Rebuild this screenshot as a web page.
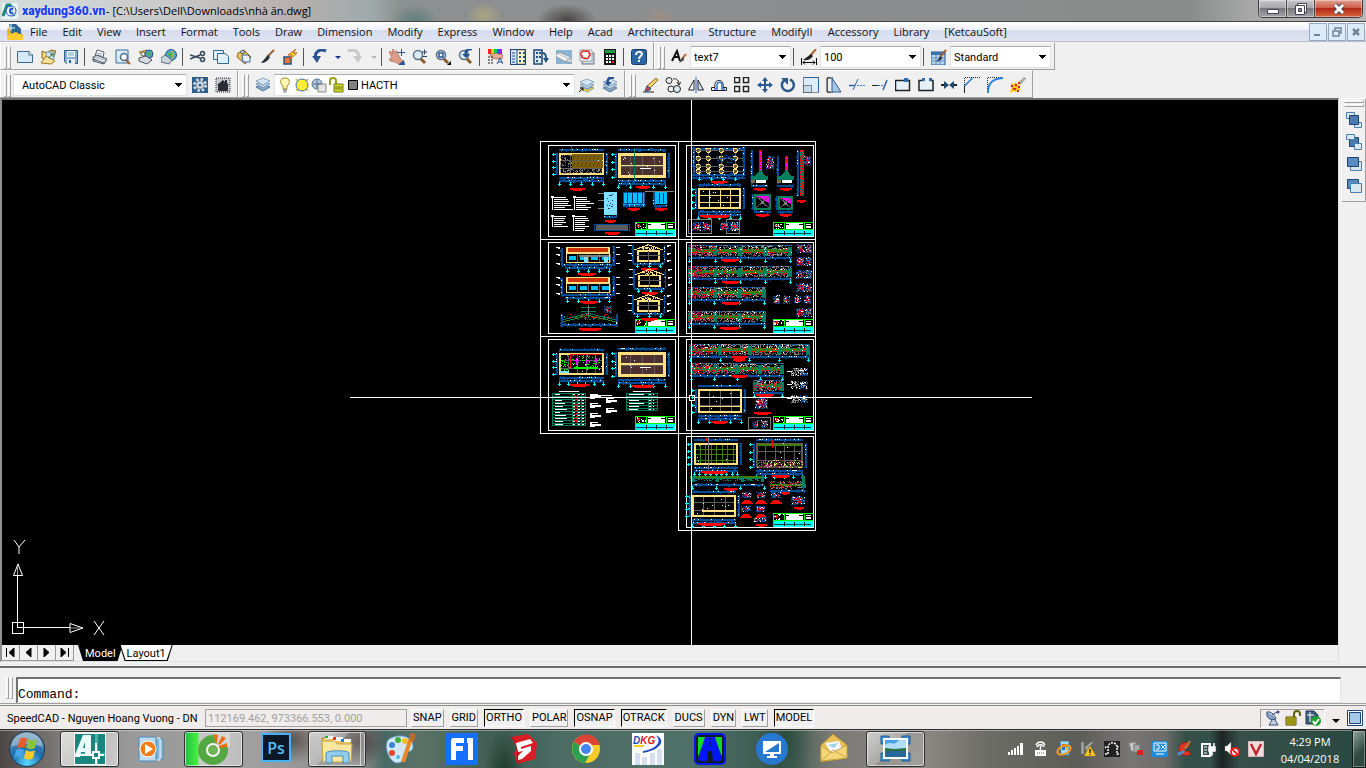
<!DOCTYPE html>
<html lang="en">
<head>
<meta charset="utf-8">
<title>AutoCAD 2007 - [C:\Users\Dell\Downloads\nhà ăn.dwg]</title>
<style>
    html, body { margin: 0; height: 100%; overflow: hidden; }
    body { background: #f0f0f0; color: #000; font: 11px Roboto, Arial, sans-serif; }
</style>
</head>
<body>
<cad-window>
    <title-bar slot="top" watermark="xaydung360.vn">- [C:\Users\Dell\Downloads\nhà ăn.dwg]</title-bar>
    <menu-bar slot="top" items="File,Edit,View,Insert,Format,Tools,Draw,Dimension,Modify,Express,Window,Help,Acad,Architectural,Structure,ModifyII,Accessory,Library,[KetcauSoft]"></menu-bar>

    <tool-row slot="top">
        <tool-bar>
            <tool-button icon="new" label="New"></tool-button>
            <tool-button icon="open" label="Open"></tool-button>
            <tool-button icon="save" label="Save"></tool-button>
            <tool-sep></tool-sep>
            <tool-button icon="plot" label="Plot"></tool-button>
            <tool-button icon="preview" label="Plot Preview"></tool-button>
            <tool-button icon="publish" label="Publish"></tool-button>
            <tool-button icon="dwf" label="3D DWF"></tool-button>
            <tool-sep></tool-sep>
            <tool-button icon="cut" label="Cut"></tool-button>
            <tool-button icon="copy" label="Copy"></tool-button>
            <tool-button icon="paste" label="Paste"></tool-button>
            <tool-button icon="match" label="Match Properties"></tool-button>
            <tool-button icon="block" label="Block Editor"></tool-button>
            <tool-sep></tool-sep>
            <tool-button icon="undo" label="Undo"></tool-button>
            <tool-button icon="drop" label="Undo list" narrow></tool-button>
            <tool-button icon="redo" label="Redo"></tool-button>
            <tool-button icon="dropoff" label="Redo list" narrow></tool-button>
            <tool-sep></tool-sep>
            <tool-button icon="pan" label="Pan"></tool-button>
            <tool-button icon="zoom" label="Zoom Realtime"></tool-button>
            <tool-button icon="zoomwin" label="Zoom Window"></tool-button>
            <tool-button icon="zoomprev" label="Zoom Previous"></tool-button>
            <tool-sep></tool-sep>
            <tool-button icon="props" label="Properties"></tool-button>
            <tool-button icon="dcenter" label="DesignCenter"></tool-button>
            <tool-button icon="palettes" label="Tool Palettes"></tool-button>
            <tool-button icon="sheets" label="Sheet Set Manager"></tool-button>
            <tool-button icon="markup" label="Markup Set Manager"></tool-button>
            <tool-button icon="calc" label="QuickCalc"></tool-button>
            <tool-sep></tool-sep>
            <tool-button icon="help" label="Help"></tool-button>
        </tool-bar>
        <tool-bar>
            <tool-button icon="textstyle" label="Text Style"></tool-button>
            <combo-box label="Text style" value="text7" class="style"></combo-box>
            <tool-sep></tool-sep>
            <tool-button icon="dimstyle" label="Dimension Style"></tool-button>
            <combo-box label="Dimension style" value="100" class="style"></combo-box>
            <tool-sep></tool-sep>
            <tool-button icon="tablestyle" label="Table Style"></tool-button>
            <combo-box label="Table style" value="Standard" class="style"></combo-box>
        </tool-bar>
    </tool-row>

    <tool-row slot="top">
        <tool-bar>
            <combo-box label="Workspace" value="AutoCAD Classic" class="workspace"></combo-box>
            <tool-button icon="gear" label="Workspace Settings"></tool-button>
            <tool-button icon="home" label="My Workspace"></tool-button>
        </tool-bar>
        <tool-bar>
            <tool-button icon="layers" label="Layer Properties Manager"></tool-button>
            <combo-box label="Layer" value="HACTH" class="layer" icons="bulb,sun,sunvp,unlock,swatch"></combo-box>
            <tool-button icon="layercur" label="Make Object's Layer Current"></tool-button>
            <tool-button icon="layerprev" label="Layer Previous"></tool-button>
        </tool-bar>
        <tool-bar>
            <tool-button icon="erase" label="Erase"></tool-button>
            <tool-button icon="copyobj" label="Copy Object"></tool-button>
            <tool-button icon="mirror" label="Mirror"></tool-button>
            <tool-button icon="offset" label="Offset"></tool-button>
            <tool-button icon="array" label="Array"></tool-button>
            <tool-button icon="move" label="Move"></tool-button>
            <tool-button icon="rotate" label="Rotate"></tool-button>
            <tool-button icon="scale" label="Scale"></tool-button>
            <tool-button icon="stretch" label="Stretch"></tool-button>
            <tool-button icon="trim" label="Trim"></tool-button>
            <tool-button icon="extend" label="Extend"></tool-button>
            <tool-button icon="breakat" label="Break at Point"></tool-button>
            <tool-button icon="break" label="Break"></tool-button>
            <tool-button icon="join" label="Join"></tool-button>
            <tool-button icon="chamfer" label="Chamfer"></tool-button>
            <tool-button icon="fillet" label="Fillet"></tool-button>
            <tool-button icon="explode" label="Explode"></tool-button>
        </tool-bar>
    </tool-row>

    <drawing-view slot="view"></drawing-view>
    <layout-tabs slot="view" tabs="Model,Layout1"></layout-tabs>

    <tool-bar slot="side" vertical>
        <tool-button icon="front" label="Bring to Front"></tool-button>
        <tool-button icon="back" label="Send to Back"></tool-button>
        <tool-button icon="above" label="Bring Above Objects"></tool-button>
        <tool-button icon="under" label="Send Under Objects"></tool-button>
    </tool-bar>

    <command-line slot="bottom">Command:</command-line>
    <status-bar slot="bottom" coords="112169.462, 973366.553, 0.000"
        modes="SNAP,GRID,ORTHO*,POLAR,OSNAP*,OTRACK*,DUCS,DYN,LWT,MODEL*">SpeedCAD - Nguyen Hoang Vuong - DN</status-bar>
    <task-bar slot="bottom" time="4:29 PM" date="04/04/2018">
        <task-item app="autocad" label="AutoCAD 2007" open></task-item>
        <task-item app="media" label="Windows Media Player"></task-item>
        <task-item app="coccoc" label="Coc Coc" open progress></task-item>
        <task-item app="photoshop" label="Photoshop"></task-item>
        <task-item app="explorer" label="Windows Explorer" open stacked></task-item>
        <task-item app="paint" label="Paint"></task-item>
        <task-item app="f1" label="F1"></task-item>
        <task-item app="sketchup" label="SketchUp"></task-item>
        <task-item app="chrome" label="Google Chrome"></task-item>
        <task-item app="dkg" label="DKG"></task-item>
        <task-item app="road" label="Road Design"></task-item>
        <task-item app="remote" label="Remote Desktop"></task-item>
        <task-item app="mail" label="Mail"></task-item>
        <task-item app="viewer" label="Photo Viewer" open></task-item>
    </task-bar>
</cad-window>

<script>
// 16x16 toolbar and tray glyphs
const LENS = '<circle cx="6" cy="6" r="4.5" fill="#dcecf8" stroke="#5a6f84" stroke-width="1.5"/><path d="M9 10l4 4" stroke="#8a5a28" stroke-width="3"/>';
const BRUSH = '<path d="M15 1L9 8" stroke="#a8602c" stroke-width="2"/><path d="M10 7l-5 6 6-3z" fill="#222"/>';
const STACK = '<path d="M1 10l7-3 7 3-7 4z" fill="#8aa8c4" stroke="#54789c"/><path d="M1 7l7-3 7 3-7 4z" fill="#b8d0e4" stroke="#54789c" stroke-width=".6"/><path d="M1 4l7-3 7 3-7 4z" fill="#d4e6f4" stroke="#54789c" stroke-width=".6"/>';
const GLYPHS = {
    new: '<path d="M.5 2.500h12l3 3v8H.5z" fill="#d6e9f8" stroke="#39688f"/><path d="M12 2v4h4" fill="#fff" stroke="#39688f"/>',
    open: '<path d="M2 2l5 2 4-3 5 1-2 5-4 8-8-6z" fill="#f0d678" stroke="#8a6a20"/><path d="M6 3h8v7H7z" fill="#cfe4f4" stroke="#55799a" stroke-width=".7"/><path d="M1 14l5-7 9 5-4 3z" fill="#f6e19a" stroke="#a07c28"/><path d="M8 9l5-4m0 0h-3m3 0v3" stroke="#3a6a38" fill="none"/>',
    save: '<path d="M1.500 1.500h13v13h-11l-2-2z" fill="#82b0d8" stroke="#2d5f94"/><path d="M4 2h8v6H4z" fill="#e8f4fc"/><path d="M5 4h6M5 6h6" stroke="#8aa8c0"/><path d="M4 10h8v5H4z" fill="#e4edf4"/><path d="M6 11h2v3H6z" fill="#2d5f94"/>',
    plot: '<path d="M3 7l2-6 7 2-1 6z" fill="#fff" stroke="#54606c"/><path d="M5 4l5 1M5 6l5 1" stroke="#9aa6b4"/><path d="M1 8l4-2 10 4-3 5-11-3z" fill="#c4ccd4" stroke="#4a5664"/><path d="M4 11l7 2" stroke="#fff" stroke-width="2"/><path d="M1 10l11 4" stroke="#4a5664"/>',
    preview: '<path d="M1 1h12v13H1z" fill="#d8ebf8" stroke="#3c6c94"/><circle cx="9" cy="8" r="3.500" fill="#f4faff" stroke="#5a6f84" stroke-width="1.500"/><path d="M11 11l4 4" stroke="#9a6030" stroke-width="2"/>',
    publish: '<path d="M1 3l8-2 6 6-7 3z" fill="#f6d35e" stroke="#a07820"/><circle cx="11" cy="5" r="4" fill="#4f9fd8" stroke="#23527c"/><path d="M9 4l3-2 1 4-3 1z" fill="#4fae48"/><path d="M1 9l7-2 6 4-5 4-8-3z" fill="#d8dce0" stroke="#4a5664"/><circle cx="5" cy="5" r="2" fill="#fff" stroke="#5c5c5c"/>',
    dwf: '<circle cx="10" cy="6" r="5.500" fill="#4aa2dc" stroke="#25557e"/><path d="M7 3c3 3 5-1 6 1s-2 2-1 5c-3 0-3-2-5-3z" fill="#56b04c"/><path d="M10 1c3 2 3 8 0 10" stroke="#f0c040" fill="none"/><path d="M0 9l4-3 7 5-3 4-8-2z" fill="#c8d4de" stroke="#5a6a78"/>',
    cut: '<path d="M0 6l10 3M0 10l10-4" stroke="#33475c" stroke-width="1.500"/><circle cx="12.500" cy="4.500" r="2" fill="none" stroke="#33475c" stroke-width="1.500"/><circle cx="12.500" cy="10.500" r="2" fill="none" stroke="#33475c" stroke-width="1.500"/>',
    copy: '<path d="M.5 1.500h10v9H.5z" fill="#e0eefa" stroke="#39688f"/><path d="M4.500 4.500h8l3 3v7h-11z" fill="#e0eefa" stroke="#39688f"/>',
    paste: '<path d="M2 4l6-3 7 7-6 7-8-7z" fill="#e8c458" stroke="#8c6a1c"/><path d="M6 6h6l2 2v5H7z" fill="#e4f2fc" stroke="#3c6c94"/><path d="M4 3l3-2 2 2-3 2z" fill="#c8ccd0" stroke="#505860"/>',
    match: '<path d="M15 1L8 8" stroke="#a8602c" stroke-width="2"/><path d="M9 6l-7 8c4 0 7-2 9-6z" fill="#26323e"/>',
    block: '<path d="M2 8h7v7H2z" fill="#f47838" stroke="#24527c" stroke-width="1.500"/><path d="M14 0L6 6h4L7 11l8-7h-4z" fill="#fcdc28" stroke="#c0601c"/>',
    undo: '<path d="M15 2C8-1 3 4 5 9" fill="none" stroke="#2a5490" stroke-width="3"/><path d="M1 7h9l-4 7z" fill="#2a5490"/>',
    redo: '<path d="M1 2c7-3 12 2 10 7" fill="none" stroke="#c8c8c8" stroke-width="3"/><path d="M6 7h9l-4 7z" fill="#c8c8c8"/>',
    drop: '<path d="M5 7h6l-3 3z" fill="#1b2f8c"/>',
    dropoff: '<path d="M5 7h6l-3 3z" fill="#b4b4b4"/>',
    pan: '<path d="M0 3l1-1 3 3-1-4 1-1 3 4V2h1l2 5 1 2 3 3-3 4-5-3-5-1-1-2 3-1z" fill="#dc9c88" stroke="#9c6050" stroke-width=".6"/><path d="M10 15l5-4 1 5h-6z" fill="#2a5490"/><path d="M12.500 0v7M9 3.500h7" stroke="#2a5490"/>',
    zoom: LENS + '<path d="M10 3h5M12.500.5v5M10 7.500h5" stroke="#2a4468"/>',
    zoomwin: LENS + '<path d="M4 4h4v4H4z" fill="#fff" stroke="#2a5490" stroke-width="1.500"/><path d="M16 12v4h-4z"/>',
    zoomprev: LENS + '<path d="M14 0C8 0 7 3 8 6" stroke="#24528c" stroke-width="2.500" fill="none"/><path d="M4 5h8l-4 4z" fill="#24528c"/>',
    props: '<path d="M1 0h3v5H1z" fill="#f22"/><path d="M4 0h3v5H4z" fill="#fc0"/><path d="M7 0h3v5H7z" fill="#0c6"/><path d="M10 0h3v5h-3z" fill="#06f"/><path d="M13 0h2v5h-2z" fill="#c0f"/><path d="M3 6l6-2 7 2v3l-6 1-5-1z" fill="#e4ac94" stroke="#8c4c3c" stroke-width=".6"/><path d="M1 8h6M1 11h6M1 14h6" stroke="#222" stroke-dasharray="2 1"/><path d="M10 15l3-6 3 6m-5-2h4" stroke="#24528c" fill="none"/>',
    dcenter: '<path d="M.5.5h15v15H.5z" fill="#fff6cc" stroke="#22466e" stroke-width="1.500"/><path d="M1 1h6v14H1z" fill="#cfe4f4"/><path d="M7 1v14M2 4h3M2 7h3M2 10h3M2 13h3" stroke="#24528c"/><path d="M9 3h2v2H9zm4 0h2v2h-2zM9 7h2v2H9zm4 0h2v2h-2zM9 11h2v2H9zm4 0h2v2h-2z" fill="#24527c"/>',
    palettes: '<path d="M1 1h8v14H1z" fill="#dceaf6" stroke="#22466e" stroke-width="1.500"/><path d="M3 3h2v2H3zm0 4h2v2H3zm0 4h2v2H3zm3-8h2v2H6zm0 4h2v2H6z" fill="#24527c"/><path d="M9 4c4 0 4 3 4 6" stroke="#24527c" stroke-width="2" fill="none"/><path d="M10 9h6l-3 5z" fill="#24527c"/>',
    sheets: '<path d="M0 1h16v14H0z" fill="#8ab4d4"/><path d="M0 5l4-2 9 4 3 3v4l-6-1-10-5z" fill="#d4dadd" stroke="#6c7c8a" stroke-width=".6"/><path d="M1 6l9 5" stroke="#f8fafa" stroke-width="2"/><path d="M9 13l6-4" stroke="#98a0a8"/>',
    markup: '<path d="M3 4h12v11H3z" fill="#ced6de" stroke="#6c7680"/><path d="M1 1h12v11H1z" fill="#f4f8fc" stroke="#9aa6b0"/><path d="M3 3c1-2 3-1 3 0 1-2 5-1 4 1 2 1 1 3 0 3 0 3-3 3-4 2-2 1-4-1-3-2-2-1-1-4 0-4z" fill="#fff" stroke="#e02020" stroke-width="1.500"/>',
    calc: '<path d="M2 0h12v16H2z" fill="#181818"/><path d="M3 1h10v3H3z" fill="#1e9a40"/><path d="M4 6h2v2H4zm3 0h2v2H7zm3 0h2v2h-2zM4 9h2v2H4zm3 0h2v2H7zm3 0h2v2h-2zM4 12h2v2H4zm3 0h2v2H7z" fill="#fff"/><path d="M10 12h2v2h-2z" fill="#e02020"/>',
    help: '<rect x=".5" y=".5" width="15" height="15" rx="2" fill="#2c66a4" stroke="#183c66"/><path d="M5 6c0-4 6-4 6-1 0 2-3 2-3 5m0 1v2" stroke="#fff" stroke-width="2" fill="none"/>',
    textstyle: '<path d="M1 12L6 2l3 10M3 8h5" stroke="#111" stroke-width="2" fill="none"/><path d="M15 5l-4 5" stroke="#a8602c" stroke-width="2"/><path d="M12 8l-4 6 5-3z" fill="#333"/>',
    dimstyle: '<path d="M15 0L9 7" stroke="#a8602c" stroke-width="2"/><path d="M10 5l-8 6h5c3-1 4-3 5-4z" fill="#222"/><path d="M.5 9v7M15.500 9v7M2 13.500h12M4 11.500l-2 2 2 2m8-4l2 2-2 2" stroke="#000" fill="none"/>',
    tablestyle: '<path d="M0 3h14v13H0z" fill="#b8d4f0" stroke="#24528c"/><path d="M0 3h14v3H0z" fill="#3c70ac"/><path d="M5 6v10M9 6v10M0 9h14M0 12h14" stroke="#5c8cc4"/>' + BRUSH,
    gear: '<path d="M0 0h16v16H0z" fill="#2f5f88"/><circle cx="8" cy="8" r="5.500" fill="none" stroke="#d4dce4" stroke-width="3" stroke-dasharray="2.400 1.900"/><circle cx="8" cy="8" r="4" fill="#d4dce4" stroke="#8496a8"/><circle cx="8" cy="8" r="1.500" fill="#2f5f88"/>',
    home: '<path d="M1 1h14v14H1z" fill="#c8ccd0" stroke="#222" stroke-dasharray="1 1"/><path d="M2 8l6-5 2 2V3h2v3l2 2h-1v6H3V8z" fill="#2a2e34"/>',
    layers: STACK,
    layercur: '<g transform="translate(0 1)">' + STACK + '<path d="M2 9l6 3 7-3v1l-7 4-6-3z" fill="#f0d040"/></g><path d="M0 15l4-4m0 0v3m0-3H1" stroke="#111"/>',
    layerprev: '<g transform="translate(0 1)">' + STACK + '</g><path d="M12 1C7-1 5 3 6 6" stroke="#24528c" stroke-width="2.500" fill="none"/><path d="M3 5h7l-4 4z" fill="#24528c"/>',
    bulb: '<path d="M8 1c-6 0-5 6-2 8v3h4V9c3-2 4-8-2-8z" fill="#fffbb0" stroke="#a08c2c"/><path d="M6 13h4M6.500 15h3" stroke="#555"/>',
    sun: '<path d="M2 2l12 12M14 2L2 14" stroke="#c8c878" stroke-width="2"/><circle cx="8" cy="8" r="6" fill="#ffee30" stroke="#3c70b4"/>',
    sunvp: '<circle cx="6" cy="7" r="5" fill="#b8c8d8" stroke="#4c7098"/><path d="M7 7h8v8H7z" fill="#e4e4e0" stroke="#8a8a84"/><path d="M2 7h8M6 3v8" stroke="#4c7098"/>',
    unlock: '<path d="M2 8V4c0-4 6-4 6 0v3" fill="none" stroke="#98a018" stroke-width="2"/><path d="M6 7h9v8H6z" fill="#d8dc30" stroke="#70760c"/><path d="M7 10h7M7 12h7" stroke="#70760c"/>',
    swatch: '<path d="M3.500 3.500h9v9h-9z" fill="#808080" stroke="#000"/>',
    erase: '<path d="M1 15h11" stroke="#222"/><path d="M14 1l2 2-8 8-3-2z" fill="#f4d070" stroke="#8c6a20"/><path d="M5 9l4 3-3 2H3z" fill="#d84040" stroke="#24528c"/>',
    copyobj: '<circle cx="4" cy="3.500" r="3" fill="#eef4fa" stroke="#222"/><circle cx="6" cy="12" r="3" fill="#eef4fa" stroke="#222"/><circle cx="12" cy="12" r="3.500" fill="#dce8f4" stroke="#222"/><path d="M8 2c4-1 6 2 6 5m-2-2l2 3 2-3" stroke="#222" fill="none"/>',
    mirror: '<path d="M6 3v10H.5z" fill="#fff" stroke="#222"/><path d="M10 3v10h5.500z" fill="#d0e2f4" stroke="#222"/><path d="M8 0v16" stroke="#2a60b0"/>',
    offset: '<path d="M.5 13.500v-3H4C2 1 14 1 12 10.500h3.500v3z" fill="#fff" stroke="#222"/><path d="M3 12h3V9c-1-5 6-5 5 0v3h3" stroke="#2c72c8" stroke-width="1.500" fill="none"/>',
    array: '<path d="M.5.500h5v5h-5zM9.500.500h5v5h-5zM.5 9.500h5v5h-5zM9.500 9.500h5v5h-5z" fill="#fff" stroke="#222" stroke-width="1.500"/>',
    move: '<path d="M8 2v12M2 8h12" stroke="#2c5a90" stroke-width="2"/><path d="M8 0l3 4H5zM8 16l3-4H5zM0 8l4-3v6zM16 8l-4-3v6z" fill="#2c5a90"/>',
    rotate: '<path d="M10 2.500a6 6 0 1 1-6 1" fill="none" stroke="#2c5a90" stroke-width="2.500"/><path d="M1 1h7v7z" fill="#2c5a90"/>',
    scale: '<path d="M.5.500h15v15H.5z" fill="#dcecf8" stroke="#222" stroke-dasharray="1 1"/><path d="M.5 8.500h8v7h-8z" fill="#c4dcf0" stroke="#222" stroke-dasharray="1 1"/><path d="M1 .5h14.500V15" stroke="#2c62a8" fill="none"/>',
    stretch: '<path d="M1.500.500h5v15h-5z" fill="none" stroke="#222" stroke-dasharray="1 1"/><path d="M6 1l9 14H6z" fill="#a8c8e4" stroke="#2c5a90"/><path d="M1 1h4M1 15h4M1 1v14" stroke="#222"/>',
    trim: '<path d="M0 8.500h6" stroke="#2c62a8" stroke-width="1.500"/><path d="M8 8.500h8" stroke="#2c82d8" stroke-dasharray="2 1"/><path d="M9 2L4 13" stroke="#2c62a8"/>',
    extend: '<path d="M0 8.500h6" stroke="#222"/><path d="M6 8.500h6" stroke="#2c82d8" stroke-dasharray="2 1"/><path d="M15 3l-4 10" stroke="#2c62a8" stroke-width="1.500"/>',
    breakat: '<path d="M.5 3.500h14v10H.5z" fill="#e4f0fa" stroke="#222" stroke-width="1.500"/><path d="M9 1h4v4H9z" fill="#2c6ab4"/>',
    break: '<path d="M5 3.500H1v10h14v-10h-3" fill="#e4f0fa" stroke="#222" stroke-width="1.500"/><path d="M4 1h3v3H4zM11 1h3v3h-3z" fill="#2c6ab4"/>',
    join: '<path d="M0 8h5m6 0h5" stroke="#222" stroke-width="2"/><path d="M3 4l5 4-5 4zM13 4L8 8l5 4z" fill="#20486c"/>',
    chamfer: '<path d="M.5 16V.500H16" fill="none" stroke="#222" stroke-dasharray="1 1"/><path d="M.5 16V9l8-8" fill="none" stroke="#222"/><path d="M.5 9l8-8" stroke="#2c82d8" stroke-width="1.500"/>',
    fillet: '<path d="M.5 16V.500H16" fill="none" stroke="#222" stroke-dasharray="1 1"/><path d="M1 16C1 6 5 2 16 1" fill="none" stroke="#2c82d8" stroke-width="2"/>',
    explode: '<path d="M10 6l5-5" stroke="#667" stroke-width="3" stroke-dasharray="1 1"/><path d="M1 6l3 1 2-2 1 3 4-1-2 3 2 3-4 0-1 3-2-2-4 2 1-4z" fill="#f8c820"/><path d="M5 7h2v2H5zM8 9h2v2H8zM3 11h3v2H3zM8 5h2v2H8zM1 8h2v2H1zM7 13h2v2H7z" fill="#d82818"/>',
    front: '<path d="M.5.500h8v6h-8zM8.500 10.500h7v5h-7z" fill="#d8e8f0" stroke="#4a80b0"/><path d="M3.500 3.500h9v9h-9z" fill="#4a7cb0" stroke="#1c4478"/>',
    back: '<path d="M3.500 3.500h9v9h-9z" fill="#4a7cb0" stroke="#1c4478"/><path d="M.5.500h8v5h-8zM8.500 9.500h7v6h-7z" fill="#d8e8f0" stroke="#4a80b0"/>',
    above: '<path d="M4.500 5.500h11v9h-11z" fill="#d8e8f0" stroke="#4a80b0"/><path d="M1.500 1.500h11v9h-11z" fill="#5a8cc0" stroke="#1c4478"/>',
    under: '<path d="M1.500 1.500h11v9h-11z" fill="#5a8cc0" stroke="#1c4478"/><path d="M4.500 5.500h11v9h-11z" fill="#d8e8f0" stroke="#4a80b0"/>',
    app: '<path d="M0 0h16v16H0z" fill="#e8f4f0"/><path d="M1 13L5 2h3l4 11" fill="none" stroke="#1c8c80" stroke-width="3"/><circle cx="9" cy="8" r="5" fill="#fff" fill-opacity=".7" stroke="#2050d0"/><path d="M11 6c-4-2-4 6 0 4" fill="none" stroke="#2050d0" stroke-width="2"/>',
    doc: '<path d="M1 4h9l6 8v3H1z" fill="#f8c820" stroke="#c88c10"/><path d="M2 0h7l5 5v5H4z" fill="#2c6494"/><path d="M4 0v7M0 4h8" stroke="#dff"/><path d="M0 11l9-3 7 4v4H0z" fill="#fccc30"/>',
    dish: '<path d="M2 2c-1 6 3 9 9 7z" fill="#8ca4c8" stroke="#34507c"/><path d="M2 2c4-1 8 3 9 7" fill="#c4d4ec" stroke="#34507c"/><path d="M7 5l5-3M7 10l-3 5h9l-3-5" stroke="#34507c" fill="#c4d0e4"/><circle cx="13" cy="2" r="1.500" fill="#34507c"/>',
    lock: '<path d="M9 7V4c0-4 6-4 6 0v2" fill="none" stroke="#606010" stroke-width="2"/><path d="M1 7h10v8H1z" fill="#e8e020" stroke="#504c08"/><path d="M2 9h8M2 11h8M2 13h8" stroke="#504c08"/>',
    xref: '<path d="M1 1h8l4 4v9H1z" fill="#3c5c7c" stroke="#203850"/><path d="M5 2v10M2 5h7" stroke="#fff"/><circle cx="11" cy="11" r="5" fill="#20a030"/><path d="M8 11l2 3 4-5" stroke="#fff" stroke-width="2" fill="none"/>',
    screen: '<path d="M.5.500h15v15H.5z" fill="#fff" stroke="#1c4478"/><path d="M2.500 2.500h11v11h-11z" fill="#a8c8e8" stroke="#1c4478"/>',
    signal: '<path d="M0 11h2v3H0zM3 9h2v5H3zM6 7h2v7H6zM9 5h2v9H9zM12 2h3v12h-3z" fill="#fff"/>',
    router: '<path d="M3 9h11v6H3z" fill="#fff"/><path d="M5 12h7" stroke="#555" stroke-dasharray="1 1"/><path d="M8.500 5v4M5 6c1-3 6-3 7 0M4 4c2-4 7-4 9 0" stroke="#fff" fill="none" stroke-width="1.500"/>',
    update: '<path d="M4 0h9v14H5z" fill="#a8dcf4" stroke="#3880a8"/><path d="M6 3h3v3H6z" fill="#e05020"/><path d="M9 3h3v3H9z" fill="#50a830"/><path d="M6 6h3v3H6z" fill="#2870d0"/><path d="M9 6h3v3H9z" fill="#f0c020"/><ellipse cx="8" cy="9" rx="7" ry="4" fill="none" stroke="#f49820" stroke-width="2" transform="rotate(-25 8 9)"/>',
    vpn: '<path d="M1 1h3v12H1zM5 6l6-5h3L8 7l5 6h-3L5 8z" fill="#a0a4a0" stroke="#666" stroke-width=".5"/><path d="M10 5l6 10H4z" fill="#ffc81c" stroke="#a87808" stroke-width=".5"/><path d="M10 8v4m0 1v1" stroke="#222" stroke-width="1.500"/>',
    ghost: '<path d="M0 0h16v16H0z" fill="#222"/><path d="M1 13h3V7c0-7 9-7 9 0v6h2M1 7l2-2m10 0l2 2" stroke="#fff" stroke-dasharray="2 1" fill="none" stroke-width="1.500"/>',
    security: '<path d="M1 2l7-1v10l-5-1z" fill="#c8c8c8" stroke="#888"/><path d="M6 3l6 1v9l-6-2z" fill="#a8a8a8" stroke="#777"/><path d="M9 9h6v5H9z" fill="#e02020"/>',
    intel: '<path d="M0 0h16v16H0z" fill="#1c8cdc"/><path d="M2 2h12v8H2z" fill="#1c8cdc" stroke="#fff"/><path d="M4 4h3v4H4m5-4l4 4m0-4L9 8M4 13h8" stroke="#fff" fill="none"/>',
    ccleaner: '<path d="M14 3C9-1 2 3 3 9c1 6 7 7 12 4l-2-3c-5 2-6-4 0-4z" fill="#e03424" stroke="#8c1810" stroke-width=".6"/><path d="M8 9L1 12l2 3 6-4z" fill="#4c8cc8"/><path d="M14 0L9 8" stroke="#b08040" stroke-width="2"/>',
    power: '<path d="M2 3h8v12H2z" fill="none" stroke="#fff" stroke-width="2"/><path d="M9 6h6v4H9zM10 2v4m4-4v4m-2 4v4H9" fill="#fff" stroke="#fff" stroke-width="1.500"/><path d="M4 6h3m-3 3h3m-3 3h3" stroke="#fff"/>',
    mute: '<path d="M1 5h2l4-4v13l-4-4H1z" fill="#fff" stroke="#777" stroke-width=".5"/><circle cx="11" cy="11" r="4" fill="#fff" stroke="#e82020" stroke-width="2"/><path d="M8 8l6 6" stroke="#e82020" stroke-width="2"/>',
    vkey: '<path d="M0 0h16v16H0z" fill="#f4dcdc" stroke="#b89c9c"/><path d="M3 3l5 10 5-10" stroke="#c02430" stroke-width="2.500" fill="none"/>'
};

// 32x32 taskbar pictures
const APPS = {
    autocad: '<path d="M0 0h32v32H0z" fill="#fff"/><path d="M1 1h30v30H1z" fill="#18867c"/><path d="M21 1h3v30h-3z" fill="#4cb0a4"/><path d="M1 20h30v3H1z" fill="#4cb0a4"/><path d="M0 24L9 2h8v20h-6v-3H7l-1 5zM9 15h2V9z" fill="#e8fcf8"/><path d="M2 22h17m7 0h4M22 25v6m0-13v-8" stroke="#fff" stroke-width="2"/><path d="M19 19h6v6h-6z" fill="#18867c" stroke="#fff" stroke-width="2"/>',
    media: '<path d="M10 6h17v20H10z" fill="#9cc8e4" stroke="#4c88b4"/><path d="M8 5h16v22H8z" fill="#7cb4dc" stroke="#e8f4fc"/><path d="M3 4h17v24H3z" fill="#bcdcf0" stroke="#4c88b4"/><circle cx="12" cy="16" r="8" fill="#f47c14" stroke="#fff"/><path d="M9 11l8 5-8 5z" fill="#fff"/>',
    coccoc: '<circle cx="15" cy="17" r="11" fill="#fff" fill-opacity=".9" stroke="#54a844" stroke-width="8"/><circle cx="15" cy="17" r="5" fill="#6cb454"/><path d="M15 0h17v14l-12-1z" fill="#d4d8d4"/><path d="M16 1l4 1-1 8-2-1zM24 3l4 2-6 7-2-1zM29 10v4l-8 1 0-2z" fill="#f06c14"/>',
    photoshop: '<path d="M2 1h28v27H2z" fill="#0c1828" stroke="#48b0f8" stroke-width="2"/><text x="16" y="21" text-anchor="middle" font-family="Open Sans, sans-serif" font-size="16" font-weight="600" fill="#58c0f8">Ps</text>',
    explorer: '<path d="M1 5h11l3 2h15v21H2z" fill="#ecc860" stroke="#a88838"/><path d="M4 3h9v3H4z" fill="#f4f4f4"/><path d="M12 4h10v4H12z" fill="#fff"/><path d="M20 6h10v3H20z" fill="#fff"/><path d="M4 3h3v2H4z" fill="#30a840"/><path d="M12 4h3v3h-3z" fill="#e03c20"/><path d="M20 6h3v3h-3z" fill="#2878d8"/><path d="M1 8h13l2 3h15l-1 18H2z" fill="#fae8a0" stroke="#c8a44c"/><path d="M5 30V20c0-3 23-3 23 0v10h-6v-7H11v7z" fill="#90ccec" stroke="#4890bc"/>',
    paint: '<path d="M4 7C12 0 28 2 29 12s-8 4-9 9 0 9-7 9S-1 14 4 7z" fill="#d0e8f8" stroke="#5894b8"/><circle cx="8" cy="12" r="3" fill="#3c80e0"/><circle cx="14" cy="7" r="3" fill="#40b040"/><circle cx="21" cy="8" r="3" fill="#f0c020"/><circle cx="8" cy="20" r="3" fill="#e04828"/><circle cx="14" cy="24" r="2" fill="#58b8e0"/><path d="M27 5L19 29" stroke="#e88828" stroke-width="4"/><path d="M25 7l1-7 6 1-2 8z" fill="#b86c30"/>',
    f1: '<path d="M0 0h32v32H0z" fill="#1470f8"/><path d="M5 27V8q0-3 3-3h10v5h-8v3h7v5h-7v9zM21 10V5h6v22h-5V10z" fill="#fff"/>',
    sketchup: '<path d="M3 4l17-3 9 9-2 16-18 5-3-11 3-5z" fill="#dc1c24"/><path d="M3 4l6 6 1 20" fill="none" stroke="#8c1418"/><path d="M8 10l14-4 3 4-12 4v2l10-3v5l-9 8-4 1v-4l5-5-5 1z" fill="#fff"/>',
    chrome: '<circle cx="16" cy="16" r="14" fill="#f8cc28"/><path d="M16 16L4 9A14 14 0 0 1 30 12H16z" fill="#dc4434"/><path d="M4 9A14 14 0 0 0 15 30l6-11-5-3z" fill="#2ca050"/><circle cx="16" cy="16" r="7" fill="#fff"/><circle cx="16" cy="16" r="5" fill="#4484f0"/>',
    dkg: '<path d="M0 0h32v32H0z" fill="#fff"/><path d="M3 32V20h5v12m2 0V24h5v8m3 0V20h5v12m2 0V16h5v16" fill="#d4e0f0"/><path d="M2 13h10" stroke="#f0d020" stroke-width="2"/><path d="M23 2c11 4 8 14-12 18v-2c16-3 19-11 12-16z" fill="#1c4cc0"/><text x="1" y="11" font-family="Liberation Sans, sans-serif" font-size="10" font-weight="700" font-style="italic" fill="#1c4cc0">D<tspan fill="#e01818">KG</tspan></text>',
    road: '<rect x="1" y="1" width="30" height="30" rx="4" fill="#101c20" stroke="#0018f0" stroke-width="2"/><path d="M4 4h8L4 24z" fill="#10d828"/><path d="M20 4h8v20z" fill="#10d828"/><path d="M11 4h10l7 22c0 3-9 2-9 2h-6s-9 1-9-2z" fill="#0018f8"/><path d="M16 5v2m0 2v4" stroke="#101c20"/><path d="M14 18h4l1 10h-6z" fill="#101c20"/>',
    remote: '<circle cx="16" cy="16" r="16" fill="#2878d0"/><path d="M8 9h16v11H8z" fill="#2878d0" stroke="#fff" stroke-width="2"/><path d="M9 10h14L9 19zM14 21h4v2h3v2H11v-2h3z" fill="#fff"/>',
    mail: '<path d="M3 12L15 1l13 10 1 14-26 4z" fill="#e8c058" stroke="#b08c34"/><path d="M7 10l14-2 3 8-10 5z" fill="#f4f8fc"/><path d="M10 12l10-2-4 5z" fill="#a0cce8"/><path d="M3 13l11 7 15-8v13L3 28z" fill="#f4d878" stroke="#c8a444"/><path d="M3 28l12-11 14 8" fill="none" stroke="#c8a444"/>',
    viewer: '<path d="M1 3h8v8H1zM22 3h8v8h-8zM1 20h8v8H1zM22 20h8v8h-8z" fill="#3c8cd0" stroke="#1c5c98"/><path d="M3 5h25v21H3z" fill="#fff"/><path d="M5 7h21v17H5z" fill="#48a0e8"/><path d="M5 12c5-5 8 1 12-3s6-1 9-2v10H5z" fill="#b0dcf8"/><path d="M5 15l9 1 12-1v3H5z" fill="#2c7048"/><path d="M5 18h21v6H5z" fill="#286898"/>'
};

function glyph(name, size = 16) {
    return `<svg width="${size}" height="${size}" viewBox="0 0 16 16" aria-hidden="true">${GLYPHS[name]}</svg>`;
}

class CadWindow extends HTMLElement {
    constructor() {
        super();
        this.attachShadow({ mode: 'open' }).innerHTML = `
            <style>
                :host { display: flex; flex-direction: column; height: 100vh; background: #f0f0f0; }
                .top, .bottom { flex: none; }
                .middle { flex: 1; min-height: 0; display: flex; gap: 2px; border-bottom: 2px solid #6e6e6e; }
                .view {
                    flex: 1;
                    min-width: 0;
                    display: flex;
                    flex-direction: column;
                    margin-bottom: 4px;
                    border: 1px solid;
                    border-width: 2px 1px 1px 2px;
                    border-color: #707070 #e0e0e0 #e0e0e0 #909090;
                }
                .side { flex: none; width: 25px; }
            </style>
            <div class="top"><slot name="top"></slot></div>
            <main class="middle">
                <div class="view"><slot name="view"></slot></div>
                <div class="side"><slot name="side"></slot></div>
            </main>
            <div class="bottom"><slot name="bottom"></slot></div>
        `;
    }
}

class TitleBar extends HTMLElement {
    constructor() {
        super();
        this.attachShadow({ mode: 'open' });
        this.render();
    }

    render() {
        this.shadowRoot.innerHTML = `
            <style>
                :host {
                    display: flex;
                    align-items: flex-start;
                    height: 21px;
                    border-bottom: 1px solid #444;
                    background:
                        radial-gradient(ellipse 24px 16px at 415px 20px, #5f7f7a, transparent),
                        radial-gradient(ellipse 18px 14px at 484px 16px, #aaa481, transparent),
                        radial-gradient(ellipse 30px 16px at 567px 20px, #4c4544, transparent),
                        radial-gradient(ellipse 14px 14px at 660px 20px, #a08c80, transparent),
                        linear-gradient(90deg, #d4dcdc 0, #c8c8c8 180px, #b8b0ae 290px, #a0aaac 370px, #8d9091 400px, #8a8c8c 1190px, #a8a8a8 1250px, #b8b8b8);
                }
                .icon { display: block; margin: 3px 4px 0 2px; }
                .mark { width: 84px; color: #1a3cf4; font: 900 12px/23px Roboto, sans-serif; text-shadow: 0 0 2px #fff; white-space: nowrap; }
                .caption { flex: 1; font: 11px/21px "Open Sans", sans-serif; white-space: nowrap; }
                .buttons { display: flex; margin-right: 3px; border: 1px solid #3c3c46; border-top: 0; border-radius: 0 0 5px 5px; overflow: hidden; }
                button { display: grid; place-items: center; width: 28px; height: 17px; padding: 0; border: 0; border-right: 1px solid #444; background: linear-gradient(#c8c8cc, #a4a4a8 50%, #77777d 50%, #a4a4a8); box-shadow: inset 0 0 0 1px #ffffff60; }
                button:last-child { width: 47px; border-right: 0; background: linear-gradient(#e0a090, #cc5844 48%, #b02818 50%, #d8683c); }
            </style>
            <svg class="icon" width="16" height="16" viewBox="0 0 16 16">${GLYPHS.app}</svg>
            <span class="mark">${this.getAttribute('watermark')}</span>
            <div class="caption"><slot></slot></div>
            <div class="buttons">
                <button aria-label="Minimize"><svg width="14" height="14"><path d="M1.500 7.500h11v4h-11z" fill="#fff" stroke="#445"/></svg></button>
                <button aria-label="Restore"><svg width="14" height="14"><path d="M3.500 1.500h9v9h-9z" fill="#fff" stroke="#445"/><path d="M1.500 3.500h9v9h-9z" fill="#fff" stroke="#445"/><path d="M4.500 6.500h3v3h-3z" fill="#889" stroke="#445"/></svg></button>
                <button aria-label="Close"><svg width="14" height="14"><path d="M3 3l8 8m0-8l-8 8" stroke="#445" stroke-width="5"/><path d="M3 3l8 8m0-8l-8 8" stroke="#fff" stroke-width="3"/></svg></button>
            </div>
        `;
    }
}

class MenuBar extends HTMLElement {
    constructor() {
        super();
        this.attachShadow({ mode: 'open' });
        this.render();
    }

    render() {
        const items = this.getAttribute('items').split(',');
        this.shadowRoot.innerHTML = `
            <style>
                :host {
                    display: flex;
                    align-items: center;
                    height: 19px;
                    border-bottom: 1px solid #b4bccc;
                    background: linear-gradient(#fff, #eef1f8 40%, #d6dcee 45%, #dfe4f3);
                }
                .doc { flex: none; margin: 0 0 0 7px; }
                nav { flex: 1; display: flex; gap: 1px; }
                nav button { padding: 0 7px; border: 0; background: none; color: #111; font: 11px/18px "Open Sans", sans-serif; white-space: nowrap; }
                nav button:hover { background: #c4d0ec; }
                .mdi { display: flex; gap: 1px; margin-right: 1px; }
                .mdi button { display: grid; place-items: center; width: 18px; height: 18px; padding: 0; border: 1px solid #98a8bc; background: #dcebfa; }
            </style>
            <svg class="doc" width="16" height="16" viewBox="0 0 16 16">${GLYPHS.doc}</svg>
            <nav>${items.map(item => `<button>${item}</button>`).join('')}</nav>
            <div class="mdi">
                <button aria-label="Minimize drawing"><svg width="10" height="10"><path d="M1 8h6" stroke="#708494" stroke-width="2"/></svg></button>
                <button aria-label="Restore drawing"><svg width="10" height="10"><path d="M3 3V1h6v5H7M1 4h6v5H1z" fill="none" stroke="#708494" stroke-width="1.500"/></svg></button>
                <button aria-label="Close drawing"><svg width="10" height="10"><path d="M2 2l6 6m0-6L2 8" stroke="#708494" stroke-width="2.500"/></svg></button>
            </div>
        `;
    }
}

class ToolRow extends HTMLElement {
    constructor() {
        super();
        this.attachShadow({ mode: 'open' }).innerHTML = `
            <style>
                :host { display: flex; height: 28px; }
            </style>
            <slot></slot>
        `;
    }
}

class ToolBar extends HTMLElement {
    constructor() {
        super();
        this.attachShadow({ mode: 'open' }).innerHTML = `
            <style>
                :host {
                    display: flex;
                    align-items: center;
                    box-sizing: border-box;
                    padding: 2px 3px 0 3px;
                    border: 1px solid;
                    border-color: #fff #a0a0a0 #a0a0a0 #fff;
                }
                .grip { flex: none; display: flex; gap: 1px; height: 23px; margin-right: 2px; }
                .grip i { width: 1px; border: 1px solid; border-color: #fff #a0a0a0 #a0a0a0 #fff; }
                :host([vertical]) { flex-direction: column; padding: 1px 0 4px; }
                :host([vertical]) .grip { flex-direction: column; width: 20px; height: auto; margin: 0 0 2px; }
                :host([vertical]) .grip i { width: auto; height: 1px; }
                ::slotted(.style) { width: 101px; --indent: 3px; }
                ::slotted(.workspace) { width: 174px; margin-right: 1px; --indent: 8px; }
                ::slotted(.layer) { width: 301px; --indent: 0px; }
            </style>
            <div class="grip"><i></i><i></i></div>
            <slot></slot>
        `;
    }
}

class ToolButton extends HTMLElement {
    constructor() {
        super();
        this.attachShadow({ mode: 'open' });
        this.render();
    }

    render() {
        this.shadowRoot.innerHTML = `
            <style>
                :host { display: block; flex: none; }
                button { display: grid; place-items: center; width: 23px; height: 22px; padding: 0; border: 0; background: none; overflow: hidden; }
                button:hover { background: #dbe6f4; }
                :host([narrow]) button { width: 13px; }
                svg { display: block; }
            </style>
            <button aria-label="${this.getAttribute('label')}">${glyph(this.getAttribute('icon'))}</button>
        `;
    }
}

class ToolSep extends HTMLElement {
    constructor() {
        super();
        this.attachShadow({ mode: 'open' }).innerHTML = `
            <style>
                :host { display: block; flex: none; width: 1px; height: 18px; margin: 0 3px 0 2px; background: #555; }
            </style>
        `;
    }
}

class ComboBox extends HTMLElement {
    constructor() {
        super();
        this.attachShadow({ mode: 'open' });
        this.render();
    }

    render() {
        const icons = (this.getAttribute('icons') || '').split(',').filter(Boolean);
        this.shadowRoot.innerHTML = `
            <style>
                :host { display: flex; align-items: center; flex: none; box-sizing: border-box; height: 22px; border: 1px solid #dfe3e8; border-top-color: #abadb3; background: #fff; position: relative; }
                .icons { display: flex; gap: 1px; padding-left: 2px; }
                .icons:empty { display: none; }
                select { appearance: none; flex: 1; min-width: 0; height: 20px; padding: 0 16px 0 var(--indent); border: 0; outline: 0; background: none; color: #000; font: inherit; }
                .arrow { position: absolute; right: 4px; top: 8px; pointer-events: none; }
            </style>
            <span class="icons">${icons.map(name => glyph(name)).join('')}</span>
            <select aria-label="${this.getAttribute('label')}"><option>${this.getAttribute('value')}</option></select>
            <svg class="arrow" width="7" height="5" shape-rendering="crispEdges"><path d="M0 0h7L3.500 4z"/></svg>
        `;
    }
}

// Colours of the drawing layers
const C = {
    wall: '#ffdf7f', dim: '#004c99', axis: '#00ffff', grey: '#808080', dark: '#5c5c5c',
    green: '#3f7f00', teal: '#007f5f', red: '#ff0000', white: '#ffffff', pink: '#ff00ff',
    brown: '#4c3030', ochre: '#7f5f00', sky: '#7fdfff', glass: '#00bfff', lime: '#00ff00',
    purple: '#99004c', roof: '#cc3300'
};

// Builds the sheets; three drawing units are one screen pixel.
class Sheet {
    constructor() {
        this.out = [];
        this.seed = 7;
    }

    rnd() {
        this.seed = (this.seed * 16807) % 2147483647;
        return this.seed / 2147483647;
    }

    box(x, y, w, h, color) {
        this.out.push(`<rect x="${x}" y="${y}" width="${w}" height="${h}" fill="${color}"/>`);
    }

    frame(x, y, w, h, color, sw = 3) {
        this.box(x, y, w, sw, color);
        this.box(x, y + h - sw, w, sw, color);
        this.box(x, y, sw, h, color);
        this.box(x + w - sw, y, sw, h, color);
    }

    shape(d, fill, stroke = 'none') {
        this.out.push(`<path d="${d}" fill="${fill}" stroke="${stroke}" stroke-width="3"/>`);
    }

    // scattered pixels, snapped to the screen grid
    dots(x, y, w, h, color, density) {
        const x0 = Math.round(x / 3) * 3, y0 = Math.round(y / 3) * 3;
        let d = '';
        for (let py = y0; py < y0 + h; py += 3) {
            for (let px = x0; px < x0 + w; px += 3) {
                if (this.rnd() < density) d += `M${px} ${py}h3v3h-3z`;
            }
        }
        this.out.push(`<path d="${d}" fill="${color}"/>`);
    }

    rule(x, y, w) {
        this.box(x, y, w, 6, C.dim);
        this.dots(x, y - 3, w, 12, C.dim, .15);
        this.dots(x, y, w, 3, C.white, .12);
    }

    vrule(x, y, h) {
        this.box(x, y, 5, h, C.dim);
        this.dots(x - 3, y, 9, h, C.dim, .2);
        this.dots(x, y, 3, h, C.white, .1);
    }

    axes(x, y, w, n) {
        for (let i = 0; i < n; i++) {
            const px = Math.round((x + i * w / (n - 1)) / 3) * 3;
            this.box(px, y - 6, 3, 12, C.axis);
            this.box(px - 3, y, 9, 3, C.axis);
        }
    }

    sideAxes(x, y, h, n) {
        for (let i = 0; i < n; i++) {
            const py = Math.round((y + i * h / (n - 1)) / 3) * 3;
            this.box(x - 4, py, 12, 3, C.axis);
            this.box(x - 1, py - 3, 3, 9, C.axis);
        }
    }

    title(x, y, w) {
        this.box(x, y, w, 6, C.red);
        this.box(x + 9, y + 3, w - 18, 6, C.red);
    }

    plan(x, y, w, h, o = {}) {
        this.rule(x, y - 12, w);
        this.rule(x, y + h + 6, w);
        this.rule(x, y + h + 15, w);
        this.vrule(x - 9, y, h);
        this.vrule(x + w + 6, y, h);
        if (o.fill) this.box(x, y, w, h, o.fill);
        const cols = o.cols || 4, rows = o.rows || 2;
        for (let i = 1; i < cols; i++) this.box(Math.round(x + i * w / cols), y, 3, h, o.grid || C.dark);
        for (let i = 1; i < rows; i++) this.box(x, Math.round(y + i * h / rows), w, 3, o.grid || C.dark);
        this.frame(x, y, w, h, o.wall || C.wall, o.sw || 6);
        this.dots(x, y, w, h, C.white, .01);
        this.axes(x, y + h + 27, w - 3, cols + 1);
        this.sideAxes(x - 18, y + 4, h - 8, 4);
    }

    notes(x, y, rows, w) {
        this.box(x, y, 3, rows * 6, C.white);
        this.box(x - 3, y, 9, 6, C.white);
        for (let i = 0; i < rows; i++) this.box(x + 6, y + 2 + i * 6, Math.round(w * (.45 + this.rnd() * .55)), 3, C.white);
    }

    detail(x, y, w = 27, h = 27) {
        this.dots(x, y, w, h, C.dim, .5);
        this.dots(x + 3, y + 3, w - 6, h - 6, C.grey, .4);
        this.dots(x + 6, y + 3, w - 12, h - 6, C.purple, .4);
        this.dots(x + 6, y + 6, w - 12, h - 12, C.red, .2);
        this.dots(x, y, w, h, C.white, .06);
    }

    beam(x, y, w, spans) {
        this.box(x, y, w, 3, C.dim);
        this.dots(x, y, w, 10, C.grey, .35);
        this.dots(x, y, w, 10, C.white, .05);
        this.box(x, y + 12, w, 12, C.green);
        this.dots(x, y + 12, w, 12, C.teal, .3);
        this.dots(x, y + 12, w, 6, C.red, .15);
        this.box(x, y + 21, w, 3, C.red);
        this.dots(x, y + 21, w, 3, C.teal, .3);
        this.dots(x, y + 24, w, 9, C.grey, .35);
        this.dots(x, y + 24, w, 9, C.purple, .12);
        for (let i = 0; i < spans; i++) this.box(Math.round(x + i * (w - 12) / (spans - 1)), y + 6, 12, 27, C.teal);
        this.dots(x, y + 3, 84, 30, C.red, .1);
        this.dots(x, y + 3, w, 27, C.white, .03);
        this.dots(x, y, 42, 36, C.purple, .2);
        this.rule(x, y + 36, w);
        this.axes(x + 4, y + 48, w - 9, spans);
    }

    page(x, y) {
        this.frame(x, y, 384, 276, C.white, 4);
        const bx = x + 260, by = y + 231;
        this.box(bx, by, 121, 43, '#000');
        this.box(bx + 39, by + 3, 52, 18, C.white);
        this.box(bx + 39, by + 6, 9, 3, '#000');
        this.box(bx + 78, by + 6, 12, 3, '#000');
        this.box(bx + 6, by + 6, 10, 9, C.red);
        this.dots(bx + 3, by + 3, 28, 20, C.white, .2);
        this.box(bx + 100, by + 6, 15, 3, C.white);
        this.box(bx + 100, by + 12, 15, 6, C.white);
        this.box(bx, by + 24, 121, 19, C.axis);
        for (const cx of [33, 63, 93]) this.box(bx + cx, by + 27, 3, 12, '#000');
        this.box(bx + 3, by + 33, 112, 3, '#004c4c');
        this.box(bx, by, 121, 3, C.lime);
        this.box(bx, by, 3, 43, C.lime);
        this.box(bx + 33, by, 3, 24, C.lime);
        this.box(bx + 94, by, 3, 24, C.lime);
        this.box(bx, by + 21, 121, 3, C.lime);
    }

    elevation(x, y, w, doors) {
        this.box(x, y, w, 21, C.wall);
        this.box(x + 6, y + 3, w - 12, 12, C.roof);
        this.frame(x, y + 18, w, 30, C.wall);
        for (let i = 0; i < 4; i++) {
            this.box(x + 9 + i * Math.round(w / 4), y + 28, 20, 12, C.glass);
            this.box(x + 32 + i * Math.round(w / 4), y + 20, 3, 26, C.dark);
        }
        if (doors) {
            this.box(x + 38, y + 23, w - 42, 6, C.grey);
            this.box(x + 54, y + 31, 12, 18, C.sky);
            this.box(x + 114, y + 31, 12, 18, C.sky);
        }
        this.rule(x - 15, y + 50, w + 30);
        this.rule(x - 3, y + 60, w + 6);
        this.vrule(x - 14, y + 3, 48);
        this.vrule(x + w + 9, y - 3, 54);
        for (const py of [0, 21, 48]) {
            this.box(x - 30, y + py, 12, 3, C.white);
            this.box(x - 24, y + py + 3, 6, 3, C.white);
            this.box(x + w + 18, y + py, 12, 3, C.white);
        }
        this.axes(x + 3, y + 72, w - 6, 5);
    }

    section(x, y) {
        this.shape(`M${x - 8} ${y + 16}L${x + 34} ${y}L${x + 78} ${y + 16}`, 'none', C.wall);
        this.frame(x, y + 16, 69, 36, C.wall, 5);
        this.box(x + 33, y + 16, 3, 36, C.dark);
        this.box(x, y + 31, 69, 3, C.dark);
        this.dots(x + 12, y + 6, 45, 12, C.wall, .45);
        this.rule(x - 12, y + 55, 93);
        this.vrule(x - 15, y, 55);
        this.vrule(x + 80, y, 55);
        for (const py of [0, 24, 45]) {
            this.box(x - 27, y + py, 12, 3, C.white);
            this.box(x + 90, y + py, 12, 3, C.white);
            this.box(x + 90, y + py + 3, 6, 3, C.white);
        }
        this.axes(x, y + 65, 70, 3);
        this.title(x + 12, y + 69, 48);
    }

    column(x, y, h) {
        this.vrule(x - 24, y, h);
        this.box(x, y, 9, h - 18, C.red);
        this.box(x + 3, y + 6, 6, h - 36, C.pink);
        this.dots(x, y, 9, h - 36, C.red, .4);
        this.shape(`M${x - 12} ${y + h - 24}L${x + 4} ${y + h - 42}L${x + 20} ${y + h - 24}z`, C.teal);
        this.box(x - 24, y + h - 24, 52, 12, C.teal);
        this.box(x - 24, y + h - 12, 12, 9, '#7f6f3f');
        this.box(x - 9, y + h - 12, 30, 9, C.white);
        this.rule(x - 24, y + h + 3, 52);
        this.title(x - 14, y + h + 12, 36);
    }

    footing(x, y, w, h) {
        this.box(x, y, w, h, C.dark);
        this.box(x + 6, y + 6, w - 12, h - 12, '#000');
        this.shape(`M${x + 4} ${y + 4}h${w - 8}v${h / 2}z`, C.pink);
        this.shape(`M${x} ${y}l${w} ${h}M${x + w} ${y}l${-w} ${h}`, 'none', C.dark);
        this.frame(x, y, w, h, C.teal, 5);
        this.box(x + w / 2 - 5, y + h / 2 - 3, 9, 9, C.grey);
        this.vrule(x - 6, y, h);
        this.rule(x, y + h + 3, w);
        this.title(x + 6, y + h + 12, w - 12);
    }

    table(x, y, w, h, cols) {
        this.box(x, y, w, h, '#000');
        for (let py = y; py < y + h - 3; py += 9) {
            this.box(x, py, w, 3, C.teal);
            this.box(x + 9, py + 3, Math.round((cols[0] - 14) * (.3 + this.rnd() * .6)), 3, C.white);
            for (const c of cols) this.box(x + c + 4, py + 3, 5, 3, C.white);
        }
        this.frame(x, y, w, h, C.teal);
        cols.forEach(c => this.box(x + c, y, 3, h, C.teal));
        this.box(x + 20, y - 5, w - 40, 3, C.white);
    }

    build() {
        // sheet borders
        this.frame(12, 9, 829, 880, C.white);
        this.box(426, 9, 3, 1170, C.white);
        this.box(12, 303, 829, 3, C.white);
        this.box(12, 594, 829, 3, C.white);
        this.box(426, 1176, 415, 3, C.white);
        this.box(838, 886, 3, 293, C.white);
        for (const [x, y] of [[36, 21], [450, 21], [36, 312], [450, 312], [36, 603], [450, 603], [450, 894]]) this.page(x, y);

        // architectural plans
        this.plan(69, 45, 135, 66, { cols: 4, rows: 3 });
        this.box(108, 48, 93, 18, C.ochre);
        this.box(108, 69, 93, 21, C.ochre);
        for (let i = 0; i < 7; i++) {
            this.box(114 + i * 12, 54, 3, 3, '#2c2000');
            this.box(111 + i * 12, 60, 3, 3, '#2c2000');
            this.box(114 + i * 12, 75, 3, 3, '#2c2000');
            this.box(111 + i * 12, 81, 3, 3, '#2c2000');
        }
        this.dots(72, 48, 36, 60, C.grey, .3);
        this.dots(108, 93, 90, 12, C.grey, .35);
        this.box(105, 24, 4, 12, C.red);
        this.title(102, 150, 46);
        this.plan(246, 45, 144, 75, { fill: C.brown, sw: 8 });
        this.box(250, 81, 136, 4, C.wall);
        this.box(294, 30, 3, 100, C.teal);
        this.box(312, 90, 33, 3, C.white);
        this.title(300, 144, 42);
        this.notes(48, 174, 7, 60);
        this.notes(114, 174, 7, 60);
        this.notes(48, 231, 6, 48);
        this.notes(112, 231, 8, 40);
        this.box(204, 162, 39, 69, C.sky);
        this.dots(213, 168, 18, 50, '#336', .2);
        this.box(186, 165, 18, 3, C.grey);
        this.box(186, 186, 18, 3, C.grey);
        this.box(186, 210, 18, 3, C.grey);
        this.rule(204, 234, 39);
        this.title(207, 246, 33);
        this.box(260, 162, 67, 42, C.glass);
        for (const x of [273, 288, 303, 318]) this.box(x, 165, 3, 30, '#036');
        this.frame(260, 162, 67, 36, C.dim);
        this.box(357, 162, 36, 36, C.glass);
        this.box(369, 165, 3, 30, '#036');
        this.box(381, 165, 3, 30, '#036');
        this.vrule(351, 162, 40);
        this.rule(260, 201, 67);
        this.rule(354, 201, 39);
        this.title(276, 211, 36);
        this.title(357, 211, 36);
        this.box(327, 160, 86, 3, C.grey);
        this.box(180, 260, 96, 16, C.dark);
        this.frame(174, 258, 108, 21, C.dim);
        this.title(207, 283, 45);

        // foundation sheet
        this.rule(468, 30, 160);
        this.rule(468, 108, 160);
        this.rule(468, 117, 160);
        this.vrule(471, 28, 84);
        this.vrule(621, 28, 84);
        for (const x of [486, 516, 555, 597]) {
            this.box(x, 30, 3, 80, C.dark);
            for (const y of [36, 60, 84, 99]) {
                this.box(470, y, 150, 3, C.dark);
                this.out.push(`<circle cx="${x + 1}" cy="${y + 1}" r="6" fill="#665522" stroke="${C.wall}" stroke-width="3"/>`);
            }
        }
        this.dots(540, 50, 55, 24, C.dim, .3);
        this.axes(488, 123, 110, 4);
        this.title(525, 128, 48);
        this.plan(486, 150, 129, 63, { cols: 4, rows: 3, grid: C.wall });
        this.title(492, 231, 90);
        this.column(669, 36, 102);
        this.column(747, 54, 84);
        this.detail(690, 54, 24, 42);
        this.box(792, 36, 12, 138, C.teal);
        this.dots(792, 36, 12, 138, C.red, .5);
        this.vrule(783, 36, 138);
        this.detail(804, 54, 21, 30);
        this.title(783, 186, 27);
        this.footing(654, 168, 51, 48);
        this.footing(726, 174, 45, 42);
        this.frame(457, 243, 70, 45, C.grey);
        this.frame(571, 243, 40, 45, C.grey);
        for (const x of [468, 498, 551, 581]) this.detail(x, 252, 25, 25);

        // elevations and sections
        this.elevation(90, 327, 132, true);
        this.title(126, 405, 54);
        this.elevation(90, 417, 132, false);
        this.title(132, 490, 54);
        this.section(303, 320);
        this.section(306, 394);
        this.section(303, 470);
        this.shape('M78 546L156 526L240 546', 'none', C.teal);
        this.shape('M78 552L156 532L240 552', 'none', C.green);
        this.dots(84, 534, 150, 12, C.teal, .3);
        this.dots(100, 528, 120, 12, C.red, .12);
        this.box(135, 507, 45, 3, C.teal);
        this.box(135, 519, 45, 3, C.teal);
        this.box(156, 500, 4, 30, C.grey);
        this.rule(78, 558, 165);
        this.vrule(75, 528, 39);
        this.vrule(240, 528, 39);
        this.title(129, 570, 67);
        this.detail(205, 504, 24, 21);

        // beam sheets
        this.beam(456, 321, 312, 5);
        this.title(555, 363, 54);
        this.beam(456, 384, 312, 5);
        this.title(558, 429, 54);
        this.beam(456, 447, 234, 4);
        this.title(558, 492, 54);
        this.beam(456, 519, 234, 4);
        this.title(552, 567, 60);
        for (const y of [318, 357, 396, 435, 510]) {
            this.detail(780, y);
            this.detail(807, y, 21);
        }
        for (const x of [711, 741, 774, 804]) this.detail(x, 471, 21, 27);

        // services plans and tables
        this.plan(69, 645, 135, 66, { cols: 5, rows: 3 });
        this.box(105, 648, 93, 3, C.red);
        this.box(102, 648, 3, 42, C.red);
        this.box(114, 687, 72, 6, C.lime);
        for (const x of [120, 150, 180]) {
            this.box(x, 660, 4, 21, C.pink);
            this.box(x - 6, 666, 16, 4, C.pink);
            this.dots(x - 12, 651, 27, 36, C.lime, .12);
        }
        this.dots(72, 651, 30, 48, C.lime, .2);
        this.box(72, 700, 26, 6, C.sky);
        this.title(102, 738, 57);
        this.plan(246, 642, 144, 75, { fill: C.brown, sw: 8 });
        this.box(250, 676, 136, 6, C.wall);
        this.box(312, 687, 33, 3, C.white);
        this.title(288, 741, 66);
        this.table(48, 765, 102, 99, [60, 74, 86]);
        this.dots(112, 772, 12, 84, C.red, .2);
        this.table(270, 765, 96, 54, [66, 76]);
        for (const [x, y] of [[162, 768], [162, 795], [162, 825], [162, 852], [210, 780], [210, 810]]) {
            this.box(x, y, 24, 3, C.white);
            this.box(x, y + 3, 6, 3, C.white);
            this.box(x, y + 6, 33, 6, C.white);
            this.box(x, y + 12, 15, 3, C.white);
        }
        this.box(162, 771, 66, 3, C.white);

        // roof beams
        this.beam(459, 618, 363, 5);
        this.title(585, 654, 52);
        this.title(591, 663, 36);
        this.beam(462, 675, 282, 5);
        this.title(585, 711, 50);
        this.beam(651, 726, 93, 2);
        this.title(660, 768, 54);
        this.plan(486, 753, 132, 72, { cols: 4, rows: 3, sw: 5 });
        this.box(486, 804, 130, 3, C.wall);
        this.title(525, 849, 52);
        this.detail(657, 780, 39, 33);
        this.title(654, 822, 50);
        this.frame(636, 837, 69, 39, C.grey);
        this.detail(648, 846, 20, 24);
        this.detail(675, 846, 20, 24);
        for (const y of [690, 729, 771]) {
            this.dots(765, y, 24, 24, C.grey, .5);
            this.dots(792, y, 24, 24, C.dim, .5);
            this.dots(792, y + 3, 18, 18, C.grey, .4);
            this.box(753, y + 9, 15, 3, C.white);
            this.box(792, y + 6, 12, 3, C.white);
            this.dots(765, y, 51, 24, C.white, .08);
        }

        // floor framing sheet
        this.plan(474, 915, 132, 66, { cols: 8, rows: 4, grid: C.green });
        this.box(516, 897, 3, 96, C.grey);
        this.box(510, 900, 6, 9, C.red);
        this.title(495, 999, 78);
        this.plan(660, 915, 141, 75, { cols: 5, rows: 3, wall: C.dark });
        this.box(663, 918, 135, 6, C.green);
        this.dots(660, 966, 140, 24, C.wall, .25);
        this.dots(660, 966, 140, 24, C.green, .25);
        this.dots(660, 966, 140, 24, C.purple, .15);
        this.box(708, 906, 4, 24, C.red);
        this.title(708, 1011, 54);
        this.box(462, 1014, 222, 6, C.green);
        this.box(462, 1020, 222, 3, C.teal);
        this.dots(462, 1023, 222, 6, C.teal, .3);
        for (const x of [468, 540, 615, 675]) this.box(x, 1014, 9, 18, C.teal);
        this.rule(468, 1038, 216);
        this.axes(468, 1050, 216, 4);
        this.title(564, 1050, 39);
        this.box(702, 1038, 105, 6, C.green);
        this.dots(702, 1029, 108, 24, C.grey, .35);
        this.dots(702, 1032, 108, 18, C.red, .2);
        this.box(798, 1014, 9, 36, C.teal);
        this.rule(702, 1056, 108);
        this.title(732, 1062, 30);
        this.plan(468, 1071, 132, 66, { cols: 4, rows: 3 });
        this.box(498, 1116, 100, 5, C.wall);
        this.title(486, 1155, 82);
        for (const [x, y] of [[618, 1062], [660, 1062], [705, 1062], [615, 1104], [660, 1104]]) {
            this.detail(x, y, 30, 18);
            this.shape(`M${x - 3} ${y + 36}l9-12h15l12 12z`, C.red);
        }
        this.detail(651, 1137, 42, 15);
        this.title(660, 1158, 33);
        this.detail(765, 1074, 42, 27);
        this.title(774, 1107, 30);
        return this.out.join('');
    }
}

class DrawingView extends HTMLElement {
    constructor() {
        super();
        this.attachShadow({ mode: 'open' });
        this.render();
    }

    render() {
        this.shadowRoot.innerHTML = `
            <style>
                :host { display: block; position: relative; flex: 1; min-height: 0; background: #000; overflow: hidden; }
                .model { display: block; width: 100%; height: 100%; }
                .ucs { position: absolute; left: 6px; bottom: 7px; }
            </style>
            <svg class="model" role="img" aria-label="Drawing sheets" shape-rendering="crispEdges">
                <svg x="534" y="38" width="284" height="396" viewBox="0 0 852 1188">${new Sheet().build()}</svg>
                <path d="M689.500 0V295M689.500 300V546M348 297.500H687M692 297.500H1030" stroke="#fff"/>
                <path d="M687 295.500h5v5h-5z" fill="none" stroke="#fff"/>
            </svg>
            <svg class="ucs" width="100" height="102" fill="none" stroke="#fff" role="img" aria-label="UCS icon">
                <path d="M4.500 86.500h11v11h-11zM9.500 92V40M9.500 91.500H62" shape-rendering="crispEdges"/>
                <path d="M10 28L5.500 39.500h9zM75 92l-13-4.500v9z"/>
                <path d="M9.500 30v9M72 92H62" stroke="#999"/>
                <path d="M6 4l5 7v7M17 4l-6 7M86 85l10 14M96 85L86 99"/>
            </svg>
        `;
    }
}

class LayoutTabs extends HTMLElement {
    constructor() {
        super();
        this.attachShadow({ mode: 'open' });
        this.render();
    }

    render() {
        const tabs = this.getAttribute('tabs').split(',');
        const arrows = {
            'First tab': 'M2.500 3v9M10 3v9L5 7.500z',
            'Previous tab': 'M9 3v9L4 7.500z',
            'Next tab': 'M4 3v9l5-4.500z',
            'Last tab': 'M10.500 3v9M3 3v9l5-4.500z'
        };
        this.shadowRoot.innerHTML = `
            <style>
                :host { display: flex; flex: none; height: 16px; }
                button { padding: 0; border: 0; font: inherit; }
                .nav { width: 18px; background: #f0f0f0; border-right: 1px solid #999; border-bottom: 1px solid #999; display: grid; place-items: center; }
                svg { display: block; }
                .tabs { display: flex; margin-left: 4px; }
                .tab { height: 16px; padding: 0 7px; background: #000; line-height: 15px; }
                .tab:first-child { color: #fff; clip-path: polygon(0 0, 100% 0, calc(100% - 5px) 100%, 5px 100%); }
                .tab + .tab { position: relative; margin-left: -3px; background: none; z-index: 0; }
                .tab + .tab::before { content: ""; position: absolute; inset: 0; z-index: -2; background: #000; clip-path: polygon(0 0, 100% 0, calc(100% - 5px) 100%, 5px 100%); }
                .tab + .tab::after { content: ""; position: absolute; inset: 0 1px 1px 1px; z-index: -1; background: #fff; clip-path: polygon(0 0, 100% 0, calc(100% - 5px) 100%, 5px 100%); }
            </style>
            ${Object.keys(arrows).map(name => `
                <button class="nav" aria-label="${name}"><svg width="14" height="15"><path d="${arrows[name]}" stroke="#000"/></svg></button>`).join('')}
            <div class="tabs">${tabs.map(tab => `<button class="tab">${tab}</button>`).join('')}</div>
        `;
    }
}

class CommandLine extends HTMLElement {
    constructor() {
        super();
        this.attachShadow({ mode: 'open' }).innerHTML = `
            <style>
                :host { display: flex; align-items: flex-start; padding: 9px 25px 0 6px; border-bottom: 1px solid #a0a0a0; }
                .grip { display: flex; gap: 1px; margin-right: 3px; height: 22px; }
                .grip i { width: 1px; border: 1px solid; border-color: #fff #a0a0a0 #a0a0a0 #fff; }
                .box { flex: 1; display: flex; align-items: flex-end; height: 23px; border: 1px solid; border-width: 2px 1px 1px 2px; border-color: #707070 #e4e4e4 #e4e4e4 #707070; background: #fff; font: 13px/15px "Liberation Mono", "Courier New", monospace; }
                input { flex: 1; height: 15px; padding: 0 4px; border: 0; outline: 0; background: none; font: inherit; }
            </style>
            <div class="grip"><i></i><i></i></div>
            <div class="box"><label for="entry"><slot></slot></label><input id="entry" type="text" autocomplete="off"></div>
        `;
    }
}

class StatusBar extends HTMLElement {
    constructor() {
        super();
        this.attachShadow({ mode: 'open' });
        this.render();
    }

    render() {
        const modes = this.getAttribute('modes').split(',');
        this.shadowRoot.innerHTML = `
            <style>
                :host { display: flex; align-items: center; box-sizing: border-box; height: 24px; margin-top: 1px; border-top: 1px solid #8c8c8c; background: #f0eceb; padding: 1px 3px 0 7px; }
                .user { width: 193px; white-space: nowrap; }
                output { box-sizing: border-box; width: 202px; height: 18px; margin: 0 4px 0 5px; padding-left: 2px; border: 1px solid; border-color: #a0a0a0; color: #a0a0a0; line-height: 17px; }
                .modes { display: flex; flex: 1; gap: 6px; }
                .modes button { height: 18px; padding: 0 1px; border: 1px solid; border-color: #fff #a0a0a0 #a0a0a0 #fff; background: #f0f0f0; color: #000; font: inherit; line-height: 16px; }
                .modes button[aria-pressed=true] { border-color: #000 #fff #fff #000; }
                .tray { display: flex; gap: 3px; padding: 0 3px; border: 1px solid; border-color: #a0a0a0 #fff #fff #a0a0a0; }
                .tray button, .plain { display: grid; place-items: center; width: 17px; height: 17px; padding: 0; border: 0; background: none; }
                .plain { margin-left: 2px; }
            </style>
            <span class="user"><slot></slot></span>
            <output>${this.getAttribute('coords')}</output>
            <div class="modes">${modes.map(mode => `<button aria-pressed="${mode.endsWith('*')}">${mode.replace('*', '')}</button>`).join('')}</div>
            <div class="tray">
                <button aria-label="Communication Center">${glyph('dish')}</button>
                <button aria-label="Toolbar positions unlocked">${glyph('lock')}</button>
                <button aria-label="Manage Xrefs">${glyph('xref')}</button>
            </div>
            <button class="plain" aria-label="Status bar menu"><svg width="8" height="12"><path d="M0 7h8l-4 4z"/></svg></button>
            <button class="plain" aria-label="Clean Screen">${glyph('screen')}</button>
        `;
    }
}

class TaskItem extends HTMLElement {
    constructor() {
        super();
        this.attachShadow({ mode: 'open' });
        this.render();
    }

    render() {
        this.shadowRoot.innerHTML = `
            <style>
                :host { display: flex; flex: none; width: 62px; padding: 1px 1px 1px 2px; box-sizing: border-box; }
                button { flex: 1; display: grid; place-items: center; padding: 0; border: 1px solid transparent; border-radius: 3px; background: none; }
                :host([open]) button { border-color: #303030; box-shadow: inset 0 0 0 1px #ffffff90; background: linear-gradient(135deg, #ffffffa0, #ffffff50 45%, #ffffff20 46%, #ffffff30); }
                :host([app=autocad]) button { background: linear-gradient(135deg, #ffffffc0, #ffffff90 50%, #ffffff70 51%, #ffffff80); }
                :host([progress]) button { background: linear-gradient(90deg, #20c040, #48f040 13px, #ffffff70 14px, #ffffff50); }
                :host([stacked]) { padding-right: 2px; }
                :host([stacked]) button { border-right: 1px solid #303030; box-shadow: inset 0 0 0 1px #ffffff90, inset -5px 0 0 -1px #55555580, inset -6px 0 0 -1px #ffffffa0; }
                svg { display: block; }
            </style>
            <button aria-label="${this.getAttribute('label')}"><svg width="32" height="32" viewBox="0 0 32 32">${APPS[this.getAttribute('app')]}</svg></button>
        `;
    }
}

class TaskBar extends HTMLElement {
    constructor() {
        super();
        this.attachShadow({ mode: 'open' });
        this.render();
    }

    render() {
        const tray = {
            signal: 'Network', router: 'Hotspot', update: 'Windows Update', vpn: 'Antivirus', ghost: 'Input tool',
            security: 'Security', intel: 'Graphics', ccleaner: 'CCleaner', power: 'Power', mute: 'Volume', vkey: 'Vietnamese keyboard'
        };
        this.shadowRoot.innerHTML = `
            <style>
                :host {
                    display: flex;
                    height: 38px;
                    border-top: 1px solid #2c2c2c;
                    box-shadow: inset 0 1px 0 #ffffff60;
                    background:
                        radial-gradient(ellipse 20px 40px at 505px 40px, #203c30, transparent),
                        radial-gradient(ellipse 30px 24px at 292px 10px, #5c5450, transparent),
                        radial-gradient(ellipse 30px 24px at 360px 12px, #4c4444, transparent),
                        radial-gradient(ellipse 28px 50px at 785px 10px, #2c4c40, transparent),
                        linear-gradient(90deg, #4c4744 0, #7c7a78 58px, #999 130px, #a0a0a0 250px, #8c8c8c 360px, #496a64 385px, #5a7268 420px, #3e5c52 500px, #4c6c64 560px, #50706a 690px, #38584c 780px, #787874 830px, #8c8a86 920px, #6c6c66 990px, #5c5c58 1080px, #787674 1130px, #6c6c6a 1165px, #355048 1185px, #34504a 1210px, #1c2422 1222px, #38504a 1240px, #284840);
                }
                button { padding: 0; border: 0; background: none; display: grid; place-items: center; }
                .start { width: 54px; margin-right: 4px; }
                .apps { display: flex; flex: 1; min-width: 0; }
                .tray { display: flex; align-items: center; }
                .tray button { width: 24px; height: 24px; }
                .clock { width: 84px; color: #fff; text-align: center; font: 11px/17px "Open Sans", sans-serif; padding-top: 3px; }
                .desktop { width: 14px; border: 1px solid #101c18; box-shadow: inset 0 0 0 1px #ffffff50; background: linear-gradient(135deg, #90a49c, #304840 60%); }
            </style>
            <button class="start" aria-label="Start">
                <svg width="38" height="38" viewBox="0 0 38 38">
                    <defs><radialGradient id="orb" cx=".5" cy=".9" r=".9"><stop offset="0" stop-color="#58d8fc"/><stop offset=".5" stop-color="#1c6cac"/><stop offset="1" stop-color="#7898b4"/></radialGradient></defs>
                    <circle cx="19" cy="19" r="17.500" fill="url(#orb)" stroke="#16344c"/>
                    <path d="M3 17C5-2 33-2 35 17c-10-4-22-4-32 0z" fill="#fff" fill-opacity=".35"/>
                    <path d="M12 9c3-2 5-1 7 0l-2 9c-3-1-5-1-8 1z" fill="#ec5c28"/><path d="M20 9c3 2 6 2 9 0l-2 9c-3 2-6 1-9 0z" fill="#88c440"/><path d="M8 20c3-2 6-1 8 0l-2 8c-3-2-5-2-8 0z" fill="#48a4e8"/><path d="M18 20c3 2 6 2 9 0l-2 8c-3 2-6 2-9 0z" fill="#fcc828"/>
                </svg>
            </button>
            <div class="apps"><slot></slot></div>
            <div class="tray">${Object.keys(tray).map(name => `<button aria-label="${tray[name]}">${glyph(name)}</button>`).join('')}</div>
            <div class="clock"><div>${this.getAttribute('time')}</div><div>${this.getAttribute('date')}</div></div>
            <button class="desktop" aria-label="Show desktop"></button>
        `;
    }
}

customElements.define('cad-window', CadWindow);
customElements.define('title-bar', TitleBar);
customElements.define('menu-bar', MenuBar);
customElements.define('tool-row', ToolRow);
customElements.define('tool-bar', ToolBar);
customElements.define('tool-button', ToolButton);
customElements.define('tool-sep', ToolSep);
customElements.define('combo-box', ComboBox);
customElements.define('drawing-view', DrawingView);
customElements.define('layout-tabs', LayoutTabs);
customElements.define('command-line', CommandLine);
customElements.define('status-bar', StatusBar);
customElements.define('task-item', TaskItem);
customElements.define('task-bar', TaskBar);
</script>
</body>
</html>
